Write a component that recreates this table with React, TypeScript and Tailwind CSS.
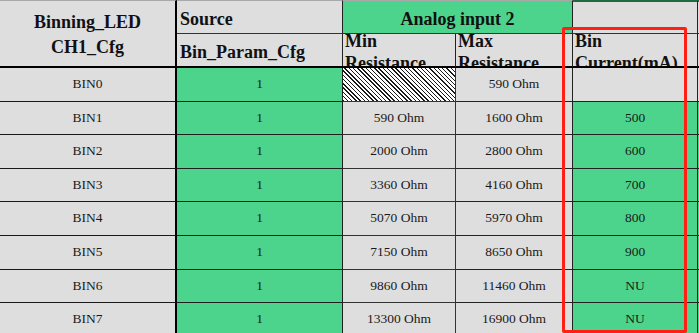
import React from "react";

type Row = {
  name: string;
  min: string | null;
  max: string;
  cur: string;
  h: string;
};

const rows: Row[] = [
  { name: "BIN0", min: null, max: "590 Ohm", cur: "", h: "h-[34px]" },
  { name: "BIN1", min: "590 Ohm", max: "1600 Ohm", cur: "500", h: "h-[33px]" },
  { name: "BIN2", min: "2000 Ohm", max: "2800 Ohm", cur: "600", h: "h-[34px]" },
  { name: "BIN3", min: "3360 Ohm", max: "4160 Ohm", cur: "700", h: "h-[33px]" },
  { name: "BIN4", min: "5070 Ohm", max: "5970 Ohm", cur: "800", h: "h-[34px]" },
  { name: "BIN5", min: "7150 Ohm", max: "8650 Ohm", cur: "900", h: "h-[34px]" },
  { name: "BIN6", min: "9860 Ohm", max: "11460 Ohm", cur: "NU", h: "h-[33px]" },
  { name: "BIN7", min: "13300 Ohm", max: "16900 Ohm", cur: "NU", h: "h-[34px]" },
];

const gray = "bg-[#dedede]";
const green = "bg-[#4dd48c]";

const DataRow: React.FC<{ row: Row }> = ({ row }) => {
  const filled = row.cur !== "";
  return (
    <div className={`flex ${row.h} text-[13.5px] text-[#1a1a1a]`}>
      <div className={`flex w-[177px] shrink-0 items-center justify-center border-r-2 border-b border-r-black border-b-[#1a1a1a] ${gray}`}>
        {row.name}
      </div>
      <div className={`flex w-[166px] shrink-0 items-center justify-center border-r border-b border-[#1f1f1f] ${green}`}>
        1
      </div>
      {row.min === null ? (
        <div className="w-[113px] shrink-0 border-r border-b border-[#333] bg-[repeating-linear-gradient(45deg,#1a1a1a_0px,#1a1a1a_1px,#ffffff_1px,#ffffff_3px)]" />
      ) : (
        <div className={`flex w-[113px] shrink-0 items-center justify-center border-r border-b border-[#333] ${gray}`}>
          {row.min}
        </div>
      )}
      <div className={`flex w-[117px] shrink-0 items-center justify-center border-r border-b border-[#222] ${gray}`}>
        {row.max}
      </div>
      <div className={`flex w-[125px] shrink-0 items-center justify-center border-r border-b border-[#222] ${filled ? green : gray}`}>
        {row.cur}
      </div>
      <div className={`w-[40px] shrink-0 border-b border-[#222] ${filled ? green : gray}`} />
    </div>
  );
};

export default function App() {
  return (
    <div className="relative h-[333px] w-[699px] overflow-hidden bg-[#dedede] font-['Liberation_Serif',serif]">
      {/* header */}
      <div className="flex h-[68px] text-[18px] font-bold leading-[22px] text-[#111]">
        <div className={`flex w-[177px] shrink-0 items-center justify-center border-t border-r-2 border-b-2 border-t-[#a8a8a8] border-r-black border-b-black pt-[3px] text-center leading-[25px] ${gray}`}>
          Binning_LED
          <br />
          CH1_Cfg
        </div>
        <div className="flex flex-col">
          <div className="flex h-[34px]">
            <div className={`flex w-[166px] shrink-0 items-end border-t border-r border-b border-t-[#a8a8a8] border-r-[#222] border-b-[#333] pb-[3px] pl-[3px] ${gray}`}>
              Source
            </div>
            <div className={`flex w-[230px] shrink-0 items-end justify-center border-t border-r border-b border-t-[#a8a8a8] border-r-[#222] border-b-[#333] pb-[3px] ${green}`}>
              Analog input 2
            </div>
            <div className={`w-[125px] shrink-0 border-t-2 border-r border-b border-t-[#1e6b3f] border-r-[#222] border-b-[#333] ${gray}`} />
            <div className={`w-[40px] shrink-0 border-t-2 border-b border-t-[#1e6b3f] border-b-[#333] ${gray}`} />
          </div>
          <div className="flex h-[34px]">
            <div className={`flex w-[166px] shrink-0 items-end border-r border-b-2 border-r-[#222] border-b-black pb-[3px] pl-[3px] ${gray}`}>
              Bin_Param_Cfg
            </div>
            <div className={`flex w-[113px] shrink-0 items-center overflow-hidden border-r border-b-2 border-r-[#222] border-b-black pt-[4px] pl-[2px] ${gray}`}>
              <span>
                Min
                <br />
                Resistance
              </span>
            </div>
            <div className={`flex w-[117px] shrink-0 items-center overflow-hidden border-r border-b-2 border-r-[#222] border-b-black pt-[4px] pl-[2px] ${gray}`}>
              <span>
                Max
                <br />
                Resistance
              </span>
            </div>
            <div className={`flex w-[125px] shrink-0 items-center overflow-hidden border-r border-b-2 border-r-[#222] border-b-black pt-[4px] pl-[2px] ${gray}`}>
              <span>
                Bin
                <br />
                Current(mA)
              </span>
            </div>
            <div className={`w-[40px] shrink-0 border-b-2 border-b-black ${gray}`} />
          </div>
        </div>
      </div>

      {/* data */}
      {rows.map((r) => (
        <DataRow key={r.name} row={r} />
      ))}

      {/* red annotation box */}
      <div className="pointer-events-none absolute top-[27px] left-[562px] h-[306px] w-[125px] rounded-[2px] border-[3px] border-[#ff1f14]" />
    </div>
  );
}
